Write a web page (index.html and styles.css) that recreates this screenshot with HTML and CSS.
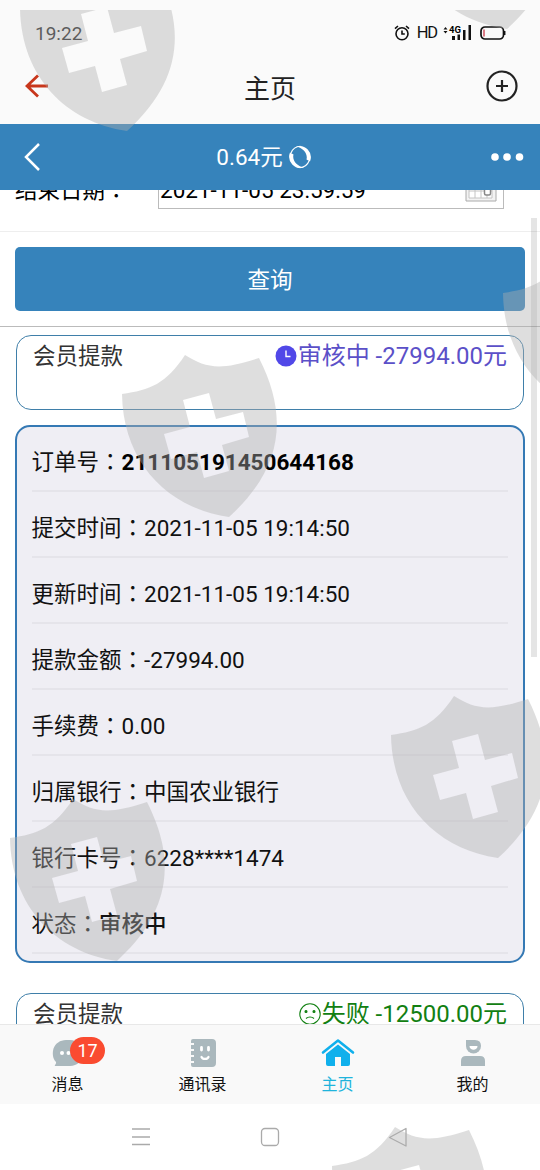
FILE: index.html
```html
<!DOCTYPE html>
<html lang="zh-CN">
<head>
    <meta charset="UTF-8">
    <meta name="viewport" content="width=device-width, initial-scale=1.0">
    <title>主页</title>
    <link rel="stylesheet" href="styles.css">
</head>
<body>
    <div class="phone">
        <div class="status-bar">
            <span class="time">19:22</span>
            <div class="status-icons">
                <svg width="16" height="16" viewBox="0 0 16 16" fill="none" stroke="#111" stroke-width="1.6">
                    <circle cx="8" cy="8.7" r="6"/>
                    <path d="M8 5.5V9h2.8M1 3.6L4 1M15 3.6L12 1"/>
                </svg>
                <span class="hd">HD</span>
                <svg class="signal" width="29" height="16" viewBox="0 0 29 16">
                    <path d="M.5 4.5L2.5 2l2 2.500zM.5 6L2.500 8.500l2-2.500z" fill="#111"/>
                    <text x="6" y="8" class="net">4G</text>
                    <path d="M9 11h3v4H9zM14.500 9.500h2.500V15h-2.500zM20 5h2.500v10H20zM25.500 0H28v15h-2.500z" fill="#111"/>
                </svg>
                <svg class="battery" width="26" height="16" viewBox="0 0 26 16" fill="none">
                    <rect x="1" y="2" width="22.500" height="12" rx="4" stroke="#111" stroke-width="1.700"/>
                    <path d="M24.700 6v4" stroke="#111" stroke-width="1.500"/>
                    <path d="M4 4.500v7" stroke="#d0505f" stroke-width="1.500"/>
                </svg>
            </div>
        </div>

        <div class="app-bar">
            <svg width="24" height="24" viewBox="0 0 24 24" fill="none" stroke="#c8371c" stroke-width="2.800">
                <path d="M23 12H2M13 1.500L2 12l11 10.500"/>
            </svg>
            <h1>主页</h1>
            <svg width="32" height="32" viewBox="0 0 32 32" fill="none" stroke="#222" stroke-width="2.200">
                <circle cx="16" cy="16" r="14.500"/>
                <path d="M16 10v12M10 16h12"/>
            </svg>
        </div>

        <div class="balance-bar">
            <svg width="18" height="30" viewBox="0 0 18 30" fill="none" stroke="#fff" stroke-width="2.500">
                <path d="M16 2L3 15l13 13"/>
            </svg>
            <div class="balance">
                <span>0.64元</span>
                <svg width="24" height="24" viewBox="0 0 24 24" fill="#fff">
                    <path d="M8 1.600A11.300 11.300 0 0 1 22 16.500L18.500 14.500C20 9 15.500 3 8 1.600z"/>
                    <path d="M16 22.400A11.300 11.300 0 0 1 2 7.500L5.500 9.500C4 15 8.500 21 16 22.400z"/>
                    <path d="M3 8C4.500 4 8 1.500 12.500 1.300M21 16c-1.500 4-5 6.500-9.500 6.700" fill="none" stroke="#fff" stroke-width="1.100"/>
                </svg>
            </div>
            <svg width="34" height="10" viewBox="0 0 34 10" fill="#fff">
                <circle cx="5" cy="5" r="3.800"/>
                <circle cx="17" cy="5" r="3.800"/>
                <circle cx="29.500" cy="5" r="3.800"/>
            </svg>
        </div>

        <div class="content">
            <div class="field-row">
                <label>结束日期<span class="colon" lang="zh-TW">：</span></label>
                <div class="date-input">
                    <span>2021-11-05 23:59:59</span>
                    <svg width="32" height="28" viewBox="0 0 32 28" fill="#f3f3f3" stroke="#aaa">
                        <path d="M1 1h30v26H1z"/>
                        <path d="M4 4h23v20H4zM4 10h23M4 17h23M10 4v20M16 4v20M22 4v20" fill="#fff" stroke="#c4c4c4"/>
                        <rect x="19.500" y="14" width="6" height="7" rx="1.500" fill="#fff" stroke="#888" stroke-width="1.500"/>
                    </svg>
                </div>
            </div>
            <div class="query-row">
                <button class="query">查询</button>
            </div>

            <div class="record">
                <span>会员提款</span>
                <span class="amount pending">
                    <svg width="22" height="22" viewBox="0 0 22 22">
                        <circle cx="11" cy="11" r="10.500" fill="#5148e8"/>
                        <path d="M11 5.500v6h4.500" fill="none" stroke="#fff" stroke-width="1.400"/>
                    </svg>
                    <span>审核中 -27994.00元</span>
                </span>
            </div>

            <div class="detail">
                <div class="row">订单号<span class="colon" lang="zh-TW">：</span><b>211105191450644168</b></div>
                <div class="row">提交时间<span class="colon" lang="zh-TW">：</span>2021-11-05 19:14:50</div>
                <div class="row">更新时间<span class="colon" lang="zh-TW">：</span>2021-11-05 19:14:50</div>
                <div class="row">提款金额<span class="colon" lang="zh-TW">：</span>-27994.00</div>
                <div class="row">手续费<span class="colon" lang="zh-TW">：</span>0.00</div>
                <div class="row">归属银行<span class="colon" lang="zh-TW">：</span>中国农业银行</div>
                <div class="row">银行卡号<span class="colon" lang="zh-TW">：</span>6228****1474</div>
                <div class="row">状态<span class="colon" lang="zh-TW">：</span><span class="state">审核中</span></div>
            </div>

            <div class="record">
                <span>会员提款</span>
                <span class="amount failed">
                    <svg width="22" height="22" viewBox="0 0 22 22" fill="none" stroke="#128012" stroke-width="1.100">
                        <circle cx="11" cy="11" r="10.200"/>
                        <path d="M7 15.500c2-2 6-2 8 0"/>
                        <circle cx="7" cy="8.500" r="1" fill="#128012"/>
                        <circle cx="15" cy="8.500" r="1" fill="#128012"/>
                    </svg>
                    <span>失败 -12500.00元</span>
                </span>
            </div>
            <div class="scrollbar"></div>
        </div>

        <div class="tab-bar">
            <div class="tab">
                <svg width="34" height="30" viewBox="0 0 34 30" fill="#aab8bd">
                    <path d="M15 2h4a13 13 0 0 1 0 26H4c-.800-1 1.500-1.500 1-4C1 20 1.500 14 2.500 10.500 4.500 5.500 9 2 15 2z"/>
                    <circle cx="11" cy="15" r="2" fill="#fff"/>
                    <circle cx="17.500" cy="15" r="2" fill="#fff"/>
                </svg>
                <span>消息</span>
                <span class="badge">17</span>
            </div>
            <div class="tab">
                <svg width="28" height="30" viewBox="0 0 28 30">
                    <path d="M4 1h19q4 0 4 4v20q0 4-4 4H4q-2 0-2-2v-2h3v-2H2v-4h3v-2H2v-4h3v-2H2V7h3V5H2V3q0-2 2-2z" fill="#aab8bd"/>
                    <path d="M12.500 9.500v2.500M19.500 9.500v2.500" stroke="#fff" stroke-width="2.800" stroke-linecap="round"/>
                    <path d="M12.500 19c1 2.500 6 2.500 7 0" fill="none" stroke="#fff" stroke-width="2.200" stroke-linecap="round"/>
                </svg>
                <span>通讯录</span>
            </div>
            <div class="tab active">
                <svg width="34" height="30" viewBox="0 0 34 30" fill="#10b0ec">
                    <path d="M2 14.500L17 2.500l15 12" fill="none" stroke="#10b0ec" stroke-width="2.600" stroke-linecap="round" stroke-linejoin="round"/>
                    <path d="M17 6.500L29 16v10q0 2-2 2h-7v-9h-6v9H7q-2 0-2-2V16z"/>
                </svg>
                <span>主页</span>
            </div>
            <div class="tab">
                <svg width="28" height="30" viewBox="0 0 28 30" fill="#aab8bd">
                    <path d="M7 2h9q6 0 6 6a7.200 7.200 0 0 1-15 0z"/>
                    <path d="M10.500 8h8c0 5-8 5-8 0z" fill="#fff"/>
                    <path d="M2 28v-5q0-5 5-5h14q5 0 5 5v5z"/>
                </svg>
                <span>我的</span>
            </div>
        </div>

        <div class="nav-bar">
            <svg width="20" height="20" viewBox="0 0 20 20" fill="none" stroke="#aaa" stroke-width="1.300">
                <path d="M1 2h18M1 10h18M1 17.500h18"/>
            </svg>
            <svg width="20" height="20" viewBox="0 0 20 20" fill="none" stroke="#aaa" stroke-width="1.300">
                <rect x="1.500" y="1.500" width="17" height="17" rx="3.500"/>
            </svg>
            <svg width="20" height="20" viewBox="0 0 20 20" fill="none" stroke="#aaa" stroke-width="1.300" stroke-linejoin="round">
                <path d="M1.500 10.500L18 1.500v17.500z"/>
            </svg>
        </div>

        <svg class="shields" width="540" height="1170" viewBox="0 0 540 1170">
            <defs>
                <path id="shield" fill-rule="evenodd" d="M0 39C28 35 44 29 63 0C84 13 98 16 137 3C166 60 162 112 107 162C45 153 1 107 0 39zM61 45L68 72L42 79L49 104L75 97L82 123L107 116L100 90L127 82L121 57L94 64L87 38z"/>
            </defs>
            <use href="#shield" x="20" y="-31"/>
            <use href="#shield" x="400" y="-133"/>
            <use href="#shield" x="503" y="254"/>
            <use href="#shield" x="122" y="355"/>
            <use href="#shield" x="391" y="696"/>
            <use href="#shield" x="10" y="799"/>
            <use href="#shield" x="332" y="1127"/>
        </svg>
    </div>
</body>
</html>
```
FILE: styles.css
```css
* {
    box-sizing: border-box;
}
body {
    margin: 0;
    font-family: Roboto, "Noto Sans CJK SC", sans-serif;
    font-size: 22.5px;
    color: #111;
    background: #fff;
}
svg {
    display: block;
    flex: none;
}
.phone {
    position: relative;
    width: 540px;
    height: 1170px;
    display: flex;
    flex-direction: column;
    overflow: hidden;
}
.status-bar {
    height: 56px;
    padding: 10px 34px 0 35px;
    display: flex;
    align-items: center;
    justify-content: space-between;
    background: #fafafa;
}
.time {
    font-size: 19px;
    color: #222;
}
.status-icons {
    display: flex;
    align-items: center;
}
.hd {
    margin: 0 6px 0 7px;
    font-size: 16.5px;
    letter-spacing: -1.2px;
    line-height: 16px;
}
.net {
    font-size: 9.5px;
    font-weight: bold;
}
.battery {
    margin-left: 8px;
}
.app-bar {
    height: 68px;
    padding: 0 22px 8px 25px;
    display: flex;
    align-items: center;
    justify-content: space-between;
    background: #fafafa;
}
.app-bar h1 {
    margin: 6px 0 0 5px;
    font-size: 26px;
    font-weight: normal;
    line-height: 32px;
    color: #222;
}
.balance-bar {
    height: 66px;
    padding: 0 16px 0 23px;
    display: flex;
    align-items: center;
    justify-content: space-between;
    color: #fff;
    background: #3683bb;
}
.balance {
    display: flex;
    align-items: center;
    gap: 5px;
    margin: 0 3px 1px 0;
}
.balance span {
    margin-bottom: 3px;
}
.content {
    position: relative;
    height: 834px;
    overflow: hidden;
}
.field-row {
    height: 66px;
    margin-top: -24px;
    padding-left: 15px;
    display: flex;
    align-items: center;
    border-bottom: 1px solid #eee;
    color: #000;
}
.field-row label {
    width: 143px;
    margin-bottom: 21px;
}
.colon {
    font-family: "Noto Sans CJK TC", sans-serif;
    line-height: 1;
}
.date-input {
    width: 346px;
    height: 42px;
    margin-bottom: 22px;
    padding: 0 6px 0 1px;
    display: flex;
    align-items: center;
    justify-content: space-between;
    border: 1px solid #bbb;
}
.date-input span {
    padding-top: 5px;
}
.query-row {
    height: 95px;
    padding: 15px 15px 0;
    border-bottom: 1px solid #bbb;
}
.query {
    display: block;
    width: 100%;
    height: 64px;
    padding: 0 0 3px;
    border: none;
    border-radius: 5px;
    font: inherit;
    color: #fff;
    background: #3683bb;
}
.record {
    height: 75px;
    margin: 8px 16px 15px;
    padding: 1px 15px 0 16px;
    display: flex;
    justify-content: space-between;
    line-height: 38px;
    border: 1.5px solid #3f7fa9;
    border-radius: 15px;
    color: #333;
}
.amount {
    display: flex;
    align-items: center;
    height: 38px;
    gap: 1px;
    font-size: 24px;
}
.amount span {
    margin-right: 1px;
}
.pending {
    color: #5b50c8;
}
.failed {
    color: #128012;
}
.detail {
    height: 538px;
    margin: 0 15px 30px;
    padding: 0 15px;
    border: 2px solid #3579b4;
    border-radius: 15px;
    background: #efeef4;
}
.row {
    height: 66px;
    padding-top: 8px;
    line-height: 56px;
    text-indent: -0.5px;
    white-space: nowrap;
    border-bottom: 2px solid #e5e4ea;
}
.row:first-child {
    height: 65px;
    padding-top: 7px;
}
.row b {
    font-weight: bold;
    color: #000;
}
.state {
    font-weight: 500;
}
.scrollbar {
    position: absolute;
    top: 28px;
    right: 3px;
    width: 6px;
    height: 439px;
    background: rgba(0, 0, 0, 0.1);
}
.tab-bar {
    height: 80px;
    display: flex;
    background: #f9f9f9;
    border-top: 1px solid #e8e8e8;
}
.tab {
    position: relative;
    flex: 1;
    padding-top: 13px;
    display: flex;
    flex-direction: column;
    align-items: center;
    gap: 5px;
    font-size: 16px;
    line-height: 24px;
}
.tab.active {
    color: #20b4dc;
}
.badge {
    position: absolute;
    top: 12px;
    left: 70px;
    width: 35px;
    height: 27px;
    border-radius: 14px;
    font-size: 18px;
    line-height: 27px;
    text-align: center;
    color: #fff;
    background: #fa4b30;
}
.nav-bar {
    height: 66px;
    padding: 0 132px 0 131px;
    display: flex;
    align-items: center;
    justify-content: space-between;
    background: #fff;
}
.shields {
    position: absolute;
    top: 0;
    left: 0;
    fill: rgba(176, 176, 176, 0.41);
    clip-path: inset(10px 0 0 0);
    pointer-events: none;
}
```
